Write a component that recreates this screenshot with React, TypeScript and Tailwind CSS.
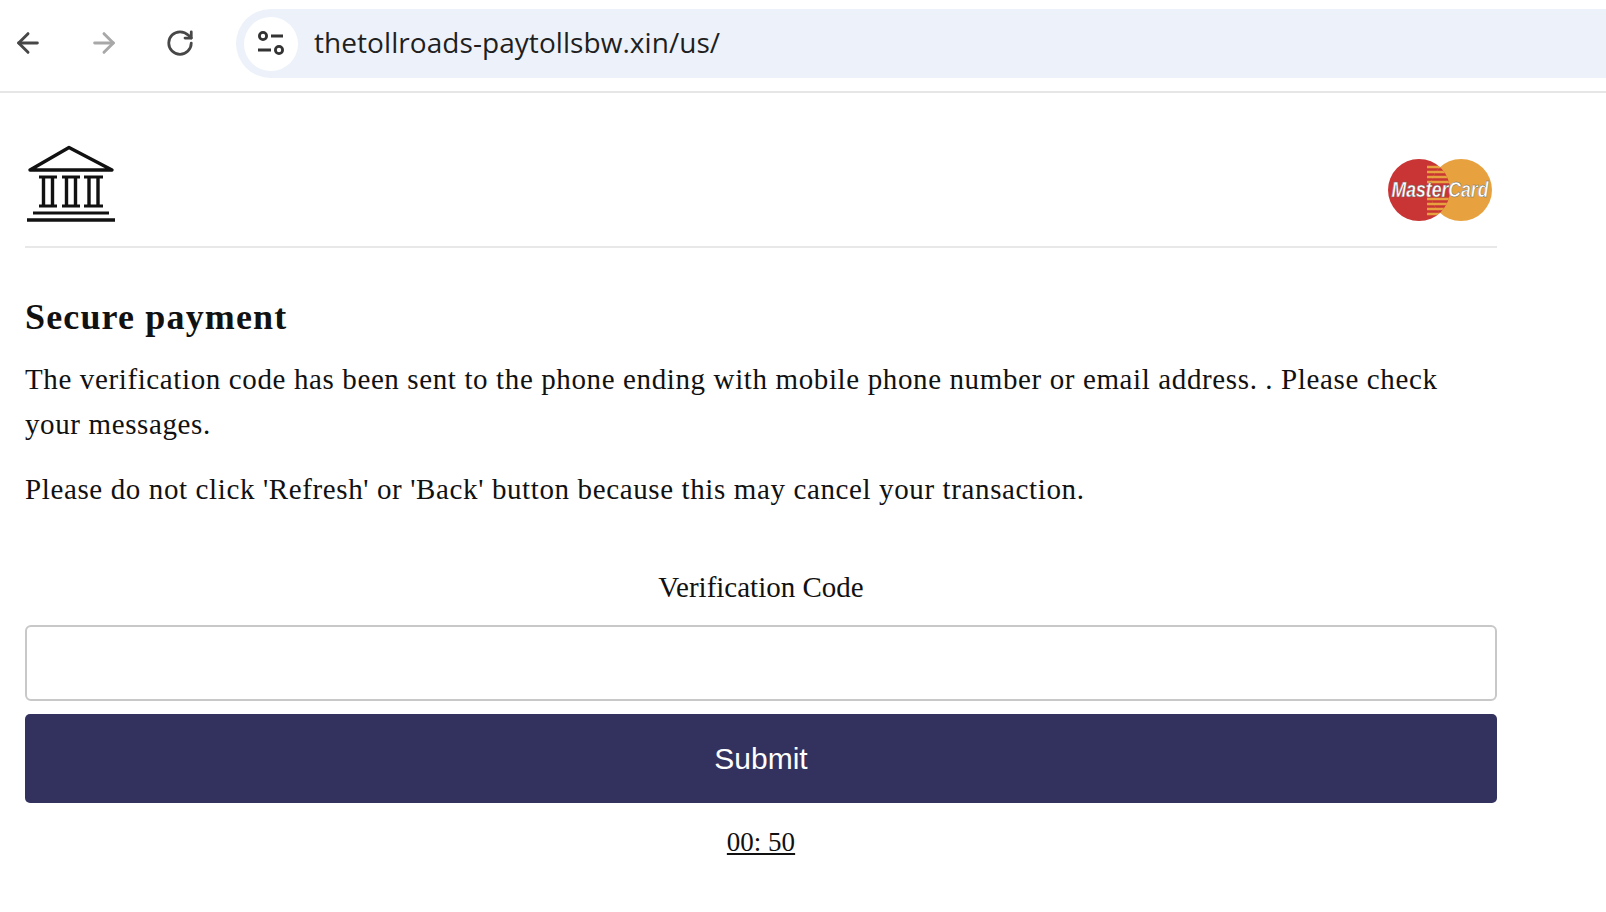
import React from 'react';
import { ArrowLeft, ArrowRight, RotateCw } from 'lucide-react';

const serif = "font-['Liberation_Serif',serif]";

const BankLogo = () => (
  <svg width="92" height="80" viewBox="0 0 92 80" fill="none" stroke="#111">
    <path d="M5 26 L44 3.5 L87 26 Z" strokeWidth="3.4" strokeLinejoin="round" />
    <path d="M14 33h18M37 33h18M59 33h19" strokeWidth="3" />
    <path d="M18.5 33v29M27.5 33v29M41.5 33v29M50.5 33v29M64 33v29M73 33v29" strokeWidth="3.4" />
    <path d="M14 62h18M37 62h18M59 62h19" strokeWidth="3" />
    <path d="M8 69h76" strokeWidth="3" />
    <path d="M2 76h88" strokeWidth="3.6" />
  </svg>
);

const MasterCardLogo = () => (
  <svg width="106" height="64" viewBox="0 0 106 64">
    <defs>
      <clipPath id="mc-lens">
        <circle cx="32" cy="32" r="31" />
      </clipPath>
    </defs>
    <circle cx="32" cy="32" r="31" fill="#c93434" />
    <circle cx="74" cy="32" r="31" fill="#e7a23f" />
    <g clipPath="url(#mc-lens)">
      <circle cx="74" cy="32" r="31" fill="#c93434" />
      <path d="M40 9h26M40 14h26M40 19h26M40 24h26M40 41h26M40 46h26M40 51h26M40 56h26" stroke="#e7a23f" strokeWidth="2.6" />
    </g>
    <text transform="translate(53 39) scale(1 1.3)" textAnchor="middle" fontFamily="Liberation Sans, sans-serif" fontSize="17.6" fontStyle="italic" fontWeight="700" fill="#fff" stroke="#666" strokeWidth="0.35">MasterCard</text>
  </svg>
);

export default function App() {
  return (
    <div className="min-h-[912px] bg-white">
      {/* Browser bar */}
      <div className="flex h-[93px] items-start border-b-2 border-[#e6e6e6] pt-[9px] overflow-hidden">
        <div className="flex h-[67px] w-[236px] shrink-0 items-center pl-[12px] gap-[44px] text-[#474747]">
          <ArrowLeft size={32} strokeWidth={2.2} />
          <ArrowRight size={32} strokeWidth={2.2} className="text-[#a8a8a8]" />
          <RotateCw size={30} strokeWidth={2.2} className="ml-[1px]" />
        </div>
        <div className="flex h-[69px] flex-1 items-center rounded-l-[35px] bg-[#edf2fa] pl-[8px]">
          <div className="flex h-[54px] w-[54px] items-center justify-center rounded-full bg-white">
            <svg width="30" height="30" viewBox="0 0 30 30" fill="none" stroke="#333" strokeWidth="2.8">
              <circle cx="7" cy="7" r="3.6" />
              <path d="M15 7h12M2 21h13" />
              <circle cx="23" cy="21" r="3.6" />
            </svg>
          </div>
          <span className="ml-[16px] mb-[4px] font-['Open_Sans',sans-serif] text-[28px] tracking-[0.06px] text-[#1f1f1f]">thetollroads-paytollsbw.xin/us/</span>
        </div>
      </div>

      {/* Page */}
      <div className={`${serif} ml-[25px] w-[1472px] text-[#111]`}>
        <div className="flex h-[155px] items-end justify-between border-b-2 border-[#e8e8e8] pb-[22px]">
          <BankLogo />
          <div className="pr-[4px] pb-[2px]"><MasterCardLogo /></div>
        </div>
        <h1 className="mt-[45px] text-[36px] leading-[48px] font-bold tracking-[1.15px]">Secure payment</h1>
        <p className="mt-[16px] pr-[40px] text-[29px] leading-[45px] tracking-[0.62px]">The verification code has been sent to the phone ending with mobile phone number or email address. . Please check your messages.</p>
        <p className="mt-[20px] text-[29px] leading-[45px] tracking-[0.62px]">Please do not click 'Refresh' or 'Back' button because this may cancel your transaction.</p>
        <div className="mt-[53px] text-center text-[29px] leading-[45px]">Verification Code</div>
        <input className="mt-[15px] block h-[76px] w-full rounded-[6px] border-2 border-[#c8c8c8] bg-white" />
        <button className="mt-[13px] block h-[89px] w-full rounded-[5px] bg-[#33325f] font-['Liberation_Sans',sans-serif] text-[30px] text-white">Submit</button>
        <div className="mt-[17px] text-center text-[27px] leading-[45px]"><span className="underline">00: 50</span></div>
      </div>
    </div>
  );
}
